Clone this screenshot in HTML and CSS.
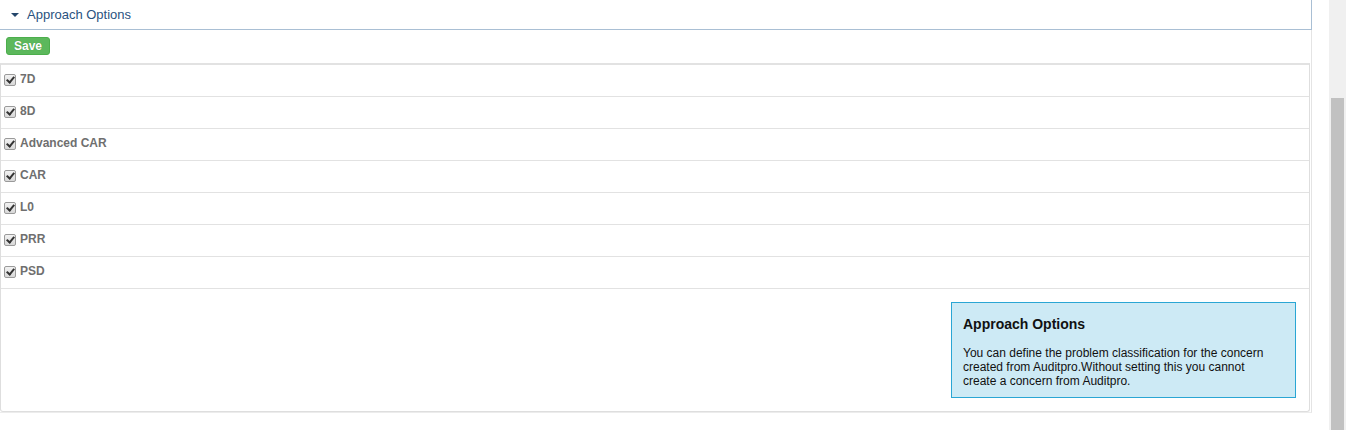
FILE: index.html
```html
<!DOCTYPE html>
<html lang="en">
<head>
    <meta charset="UTF-8">
    <meta name="viewport" content="width=device-width, initial-scale=1.0">
    <title>Approach Options</title>
    <link rel="stylesheet" href="styles.css">
</head>
<body>
    <div id="page">
        <div class="panel_head">
            <span class="caret"></span>
            <span class="panel_title">Approach Options</span>
        </div>
        <div class="panel_body">
            <div class="toolbar">
                <button class="btn_save">Save</button>
            </div>
            <div class="opt_list">
                <label class="opt_row"><input type="checkbox" checked><span>7D</span></label>
                <label class="opt_row"><input type="checkbox" checked><span>8D</span></label>
                <label class="opt_row"><input type="checkbox" checked><span>Advanced CAR</span></label>
                <label class="opt_row"><input type="checkbox" checked><span>CAR</span></label>
                <label class="opt_row"><input type="checkbox" checked><span>L0</span></label>
                <label class="opt_row"><input type="checkbox" checked><span>PRR</span></label>
                <label class="opt_row"><input type="checkbox" checked><span>PSD</span></label>
                <div class="opt_foot">
                    <div class="help_box">
                        <h3>Approach Options</h3>
                        <p>You can define the problem classification for the concern created from Auditpro.Without setting this you cannot create a concern from Auditpro.</p>
                    </div>
                </div>
            </div>
        </div>
    </div>
    <div class="scrollbar">
        <div class="thumb"></div>
    </div>
</body>
</html>
```

FILE: styles.css
```css
html, body{
    margin: 0;
    height: 100%;
}
body{
    display: flex;
    background: #fff;
    font-family: "Liberation Sans", Arial, sans-serif;
    overflow: hidden;
}
#page{
    width: 1312px;
}
.panel_head{
    height: 29px;
    border-bottom: 1px solid #a9bfd4;
    border-right: 1px solid #a9bfd4;
    display: flex;
    align-items: center;
    padding-left: 11px;
}
.caret{
    width: 0;
    height: 0;
    border-left: 4px solid transparent;
    border-right: 4px solid transparent;
    border-top: 4px solid #24466b;
    margin-right: 8px;
    margin-top: 1px;
}
.panel_title{
    font-size: 13px;
    color: #2a5280;
}
.panel_body{
    border-right: 1px solid #e4e4e4;
    border-bottom: 1px solid #ececec;
}
.toolbar{
    height: 33px;
    padding-top: 6px;
    box-sizing: border-box;
}
.btn_save{
    margin-left: 6px;
    height: 18px;
    padding: 0 7px;
    border: 1px solid #4cae4c;
    border-radius: 3px;
    background: #5cb85c;
    color: #fff;
    font-family: "Liberation Sans", Arial, sans-serif;
    font-size: 12px;
    font-weight: bold;
    line-height: 16px;
    text-shadow: 0 0 1px rgba(0,0,0,0.25);
}
.opt_list{
    width: 1310px;
    box-sizing: border-box;
    border: 1px solid #dedede;
    border-top: 2px solid #e2e2e2;
    border-radius: 0 0 3px 3px;
}
.opt_row{
    display: flex;
    align-items: center;
    height: 31px;
    box-sizing: content-box;
    border-bottom: 1px solid #e2e2e2;
    padding-left: 3px;
    font-size: 12px;
    font-weight: bold;
    color: #6f6f6f;
}
.opt_row span{
    margin-top: -3px;
}
.opt_row input{
    appearance: none;
    -webkit-appearance: none;
    width: 12px;
    height: 12px;
    margin: -2px 4px 0 0;
    border: 1px solid #9a9a9a;
    border-radius: 2px;
    background: linear-gradient(#f2f2f2, #d8d8d8);
    box-sizing: border-box;
    position: relative;
}
.opt_row input:checked::after{
    content: "";
    position: absolute;
    left: 3px;
    top: 0px;
    width: 3px;
    height: 6px;
    border-right: 2px solid #333;
    border-bottom: 2px solid #333;
    transform: rotate(40deg);
}
.opt_foot{
    display: flex;
    justify-content: flex-end;
    padding: 13px 13px 13px 0;
}
.help_box{
    width: 345px;
    box-sizing: border-box;
    height: 96px;
    padding: 13px 24px 0 11px;
    background: #cdeaf5;
    border: 1px solid #2aa6d4;
    color: #111;
}
.help_box h3{
    margin: 0 0 13px;
    font-size: 14px;
    line-height: 17px;
}
.help_box p{
    margin: 0;
    font-size: 12px;
    line-height: 14px;
}
.scrollbar{
    margin-left: auto;
    width: 17px;
    height: 100%;
    background: #f0f0f0;
    display: flex;
    justify-content: center;
}
.thumb{
    width: 13px;
    margin-top: 98px;
    background: #c1c1c1;
}
```
